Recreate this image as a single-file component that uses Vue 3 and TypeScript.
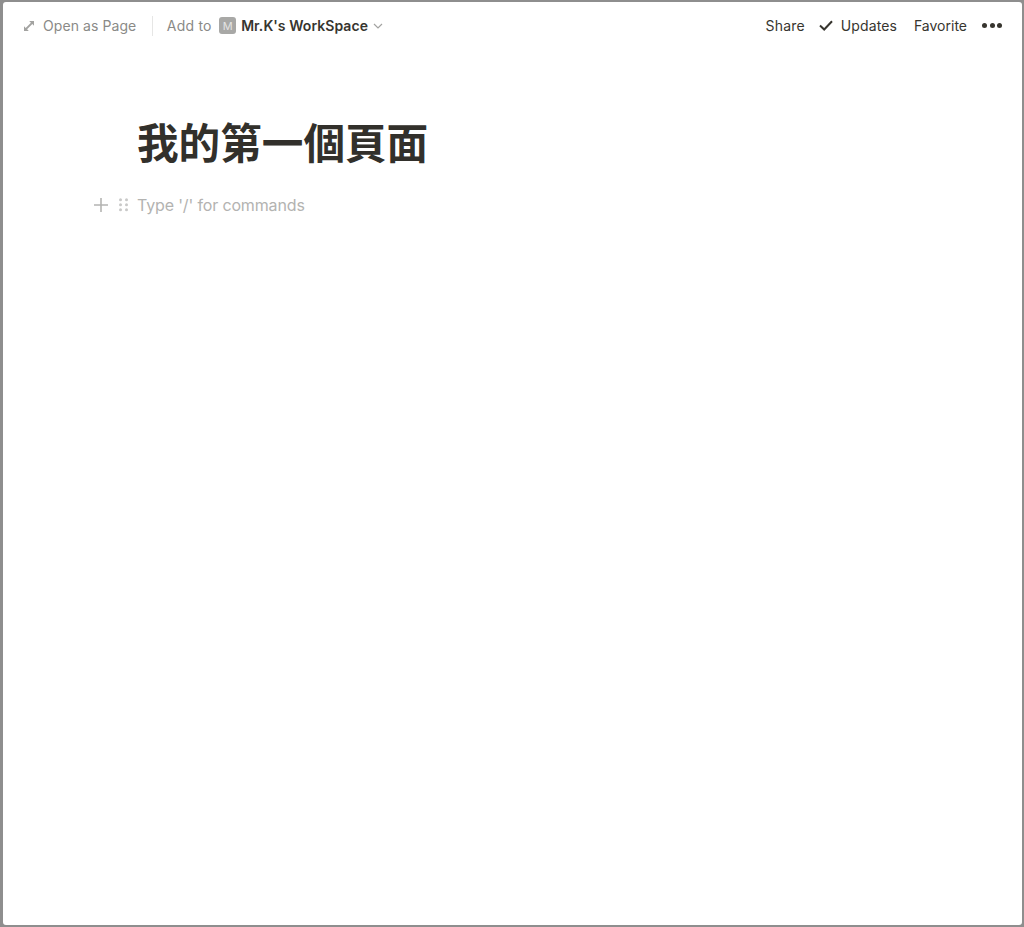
<script setup lang="ts">
const dots: number[][] = [[0,1],[6,1],[0,6],[6,6],[0,11],[6,11]];
</script>

<template>
  <div class="frame">
    <div class="sheet">
      <header class="topbar">
        <div class="left">
          <svg class="expand" viewBox="0 0 12 12" width="12" height="12" aria-hidden="true">
            <path d="M6.2 1H11v4.8L9.3 4.1 4.1 9.3 5.8 11H1V6.2l1.7 1.7 5.2-5.2z" />
          </svg>
          <span class="open">Open as Page</span>
          <span class="sep"></span>
          <span class="addto">Add to</span>
          <span class="badge">M</span>
          <span class="workspace">Mr.K's WorkSpace</span>
          <svg class="chev" viewBox="0 0 10 6" width="10" height="6" aria-hidden="true">
            <path d="M1 1l4 4 4-4" />
          </svg>
        </div>
        <div class="right">
          <span class="share">Share</span>
          <span class="updates">
            <svg viewBox="0 0 14 11" width="14" height="11" aria-hidden="true">
              <path d="M1 5.5l4.2 4L13 1.2" />
            </svg>
            Updates
          </span>
          <span class="favorite">Favorite</span>
          <span class="more" aria-hidden="true"><i></i><i></i><i></i></span>
        </div>
      </header>
      <main class="page">
        <h1 class="title">我的第一個頁面</h1>
        <div class="block">
          <div class="handles">
            <svg class="plus" viewBox="0 0 14 14" width="14" height="14" aria-hidden="true">
              <path d="M7 0v14M0 7h14" />
            </svg>
            <svg class="grip" viewBox="0 0 9 14" width="9" height="14" aria-hidden="true">
              <circle v-for="(d, i) in dots" :key="i" :cx="d[0] + 1.5" :cy="d[1] + 0.8" r="1.5" />
            </svg>
          </div>
          <span class="placeholder">Type '/' for commands</span>
        </div>
      </main>
    </div>
  </div>
</template>

<style scoped>
.frame {
  box-sizing: border-box;
  width: 1024px;
  height: 927px;
  background: #8e8e8e;
  padding: 2px 2px 2px 3px;
  font-family: Inter, "Noto Sans CJK TC", sans-serif;
}
.sheet {
  height: 100%;
  background: #fff;
  border-radius: 3px;
  overflow: hidden;
}
.topbar {
  display: flex;
  justify-content: space-between;
  align-items: center;
  height: 47px;
  padding: 0 20px 1px 20px;
  font-size: 14px;
}
.left, .right {
  display: flex;
  align-items: center;
}
.expand {
  fill: #a3a3a1;
}
.open {
  margin-left: 8px;
  letter-spacing: 0.08px;
  color: #8a8a87;
}
.sep {
  width: 1px;
  height: 20px;
  margin: 0 14px 0 15.5px;
  background: #e6e6e5;
}
.addto {
  letter-spacing: 0.2px;
  color: #8a8a87;
}
.badge {
  display: flex;
  align-items: center;
  justify-content: center;
  width: 17px;
  height: 17px;
  margin-left: 7.5px;
  border-radius: 3px;
  background: #a8a8a6;
  color: #e4e4e3;
  font-size: 11px;
}
.workspace {
  margin-left: 5px;
  letter-spacing: 0.06px;
  font-weight: 600;
  color: #37352f;
}
.chev {
  margin-left: 5px;
  fill: none;
  stroke: #a3a3a1;
  stroke-width: 1.2;
}
.right {
  color: #37352f;
}
.share {
  letter-spacing: 0.2px;
}
.updates {
  display: flex;
  align-items: center;
  gap: 8px;
  margin-left: 14px;
  letter-spacing: 0.1px;
}
.updates svg {
  fill: none;
  stroke: #37352f;
  stroke-width: 2;
}
.favorite {
  margin-left: 17px;
}
.more {
  display: flex;
  gap: 2.5px;
  margin-left: 15px;
}
.more i {
  width: 5px;
  height: 5px;
  border-radius: 50%;
  background: #37352f;
}
.page {
  padding: 0 0 0 134px;
}
.title {
  margin: 0;
  padding-top: 70px;
  font-size: 41.6px;
  line-height: 48px;
  font-weight: 700;
  color: #32302b;
}
.block {
  position: relative;
  margin-top: 25px;
  height: 24px;
  display: flex;
  align-items: center;
}
.handles {
  position: absolute;
  left: -43px;
  top: 5px;
  display: flex;
  gap: 10.5px;
}
.plus {
  fill: none;
  stroke: #b4b4b2;
  stroke-width: 1.6;
}
.grip {
  fill: #c9c9c8;
}
.placeholder {
  font-size: 16px;
  letter-spacing: -0.15px;
  color: #b3b3b1;
}
</style>
